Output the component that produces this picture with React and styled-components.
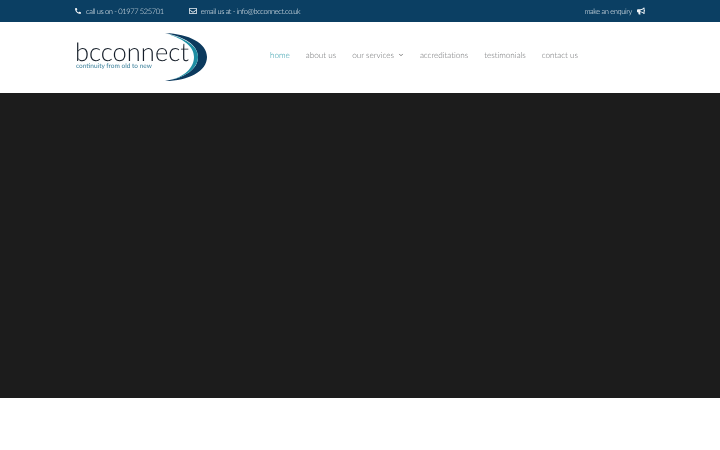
import React from "react";
import styled, { createGlobalStyle } from "styled-components";
import { FaPhone, FaRegEnvelope, FaBullhorn } from "react-icons/fa";
import { FiChevronDown } from "react-icons/fi";

const Global = createGlobalStyle`
  html, body { margin: 0; padding: 0; background: #fff; }
  * { box-sizing: border-box; }
  body { text-rendering: geometricPrecision; }
`;
const Page = styled.div`
  width: 720px;
  height: 450px;
  overflow: hidden;
  display: flex;
  flex-direction: column;
  font-family: Lato, "Liberation Sans", sans-serif;
`;
const TopBar = styled.div`
  height: 22px;
  flex: none;
  background: #0b3f63;
  color: #e8eef2;
  display: flex;
  align-items: center;
  padding: 0 75px;
  font-size: 7.5px;
  letter-spacing: -0.37px;
  font-weight: 300;
`;
const TopItem = styled.span`
  display: inline-flex;
  align-items: center;
  gap: ${p => p.$gap || 5}px;
  margin-right: ${p => p.$mr || 0}px;
  white-space: nowrap;
  will-change: opacity;
  svg { flex: none; color: #f1f5f8; }
`;
const Enquiry = styled(TopItem)`
  margin-left: auto;
`;
const Header = styled.header`
  height: 71px;
  flex: none;
  background: #fff;
  display: flex;
  align-items: center;
  padding: 0 0 3px 75px;
`;
const Logo = styled.div`
  position: relative;
  width: 133px;
  height: 49px;
  flex: none;
  margin-top: 3px;
  will-change: opacity;
`;
const LogoSwoosh = styled.svg`
  position: absolute;
  left: 90px;
  top: 0;
`;
const LogoName = styled.div`
  position: absolute;
  left: 0;
  top: 9px;
  font-weight: 300;
  font-size: 25.5px;
  line-height: 20px;
  color: #141d28;
  white-space: nowrap;
`;
const LogoTag = styled.div`
  position: absolute;
  left: 1px;
  top: 30px;
  font-size: 6.5px;
  line-height: 8px;
  color: #3a7f9a;
  white-space: nowrap;
`;
const Nav = styled.nav`
  display: flex;
  align-items: center;
  margin: 0 0 3px 62px;
  gap: 16px;
  font-size: 8.2px;
  font-weight: 300;
  letter-spacing: -0.03px;
  color: #6f7072;
  will-change: opacity;
`;
const NavItem = styled.a`
  display: inline-flex;
  align-items: center;
  gap: 4px;
  white-space: nowrap;
  color: ${p => (p.$active ? "#2c9aa8" : "inherit")};
`;
const Hero = styled.div`
  height: 305px;
  flex: none;
  background: #1c1c1c;
`;
const Footer = styled.div`
  flex: 1;
  background: #fff;
`;

export default function App() {
  return (
    <Page>
      <Global />
      <TopBar>
        <TopItem $mr={25}><FaPhone size={6} style={{ transform: "scaleX(-1)" }} />call us on - 01977 525701</TopItem>
        <TopItem $gap={4}><FaRegEnvelope size={8} />email us at - info@bcconnect.co.uk</TopItem>
        <Enquiry><span>make an enquiry</span><FaBullhorn size={8} /></Enquiry>
      </TopBar>
      <Header>
        <Logo>
          <LogoSwoosh width="43" height="49" viewBox="0 0 43 49">
            <path d="M0 0 C24 1 42 10 42 24 C42 38 24 48 0 48 C20 45 33 36 33 24 C33 12 20 4 0 0 Z" fill="#0c3a5e" />
            <path d="M3 1 C20 5 33 13 33 24 C33 35 21 44 5 47 C19 44 29 35 29 24 C29 13 18 6 3 1 Z" fill="#1f8ea3" />
          </LogoSwoosh>
          <LogoName>bcconnect</LogoName>
          <LogoTag>continuity from old to new</LogoTag>
        </Logo>
        <Nav>
          <NavItem $active>home</NavItem>
          <NavItem>about us</NavItem>
          <NavItem>our services <FiChevronDown size={6} strokeWidth={3} color="#555" /></NavItem>
          <NavItem>accreditations</NavItem>
          <NavItem>testimonials</NavItem>
          <NavItem>contact us</NavItem>
        </Nav>
      </Header>
      <Hero />
      <Footer />
    </Page>
  );
}
